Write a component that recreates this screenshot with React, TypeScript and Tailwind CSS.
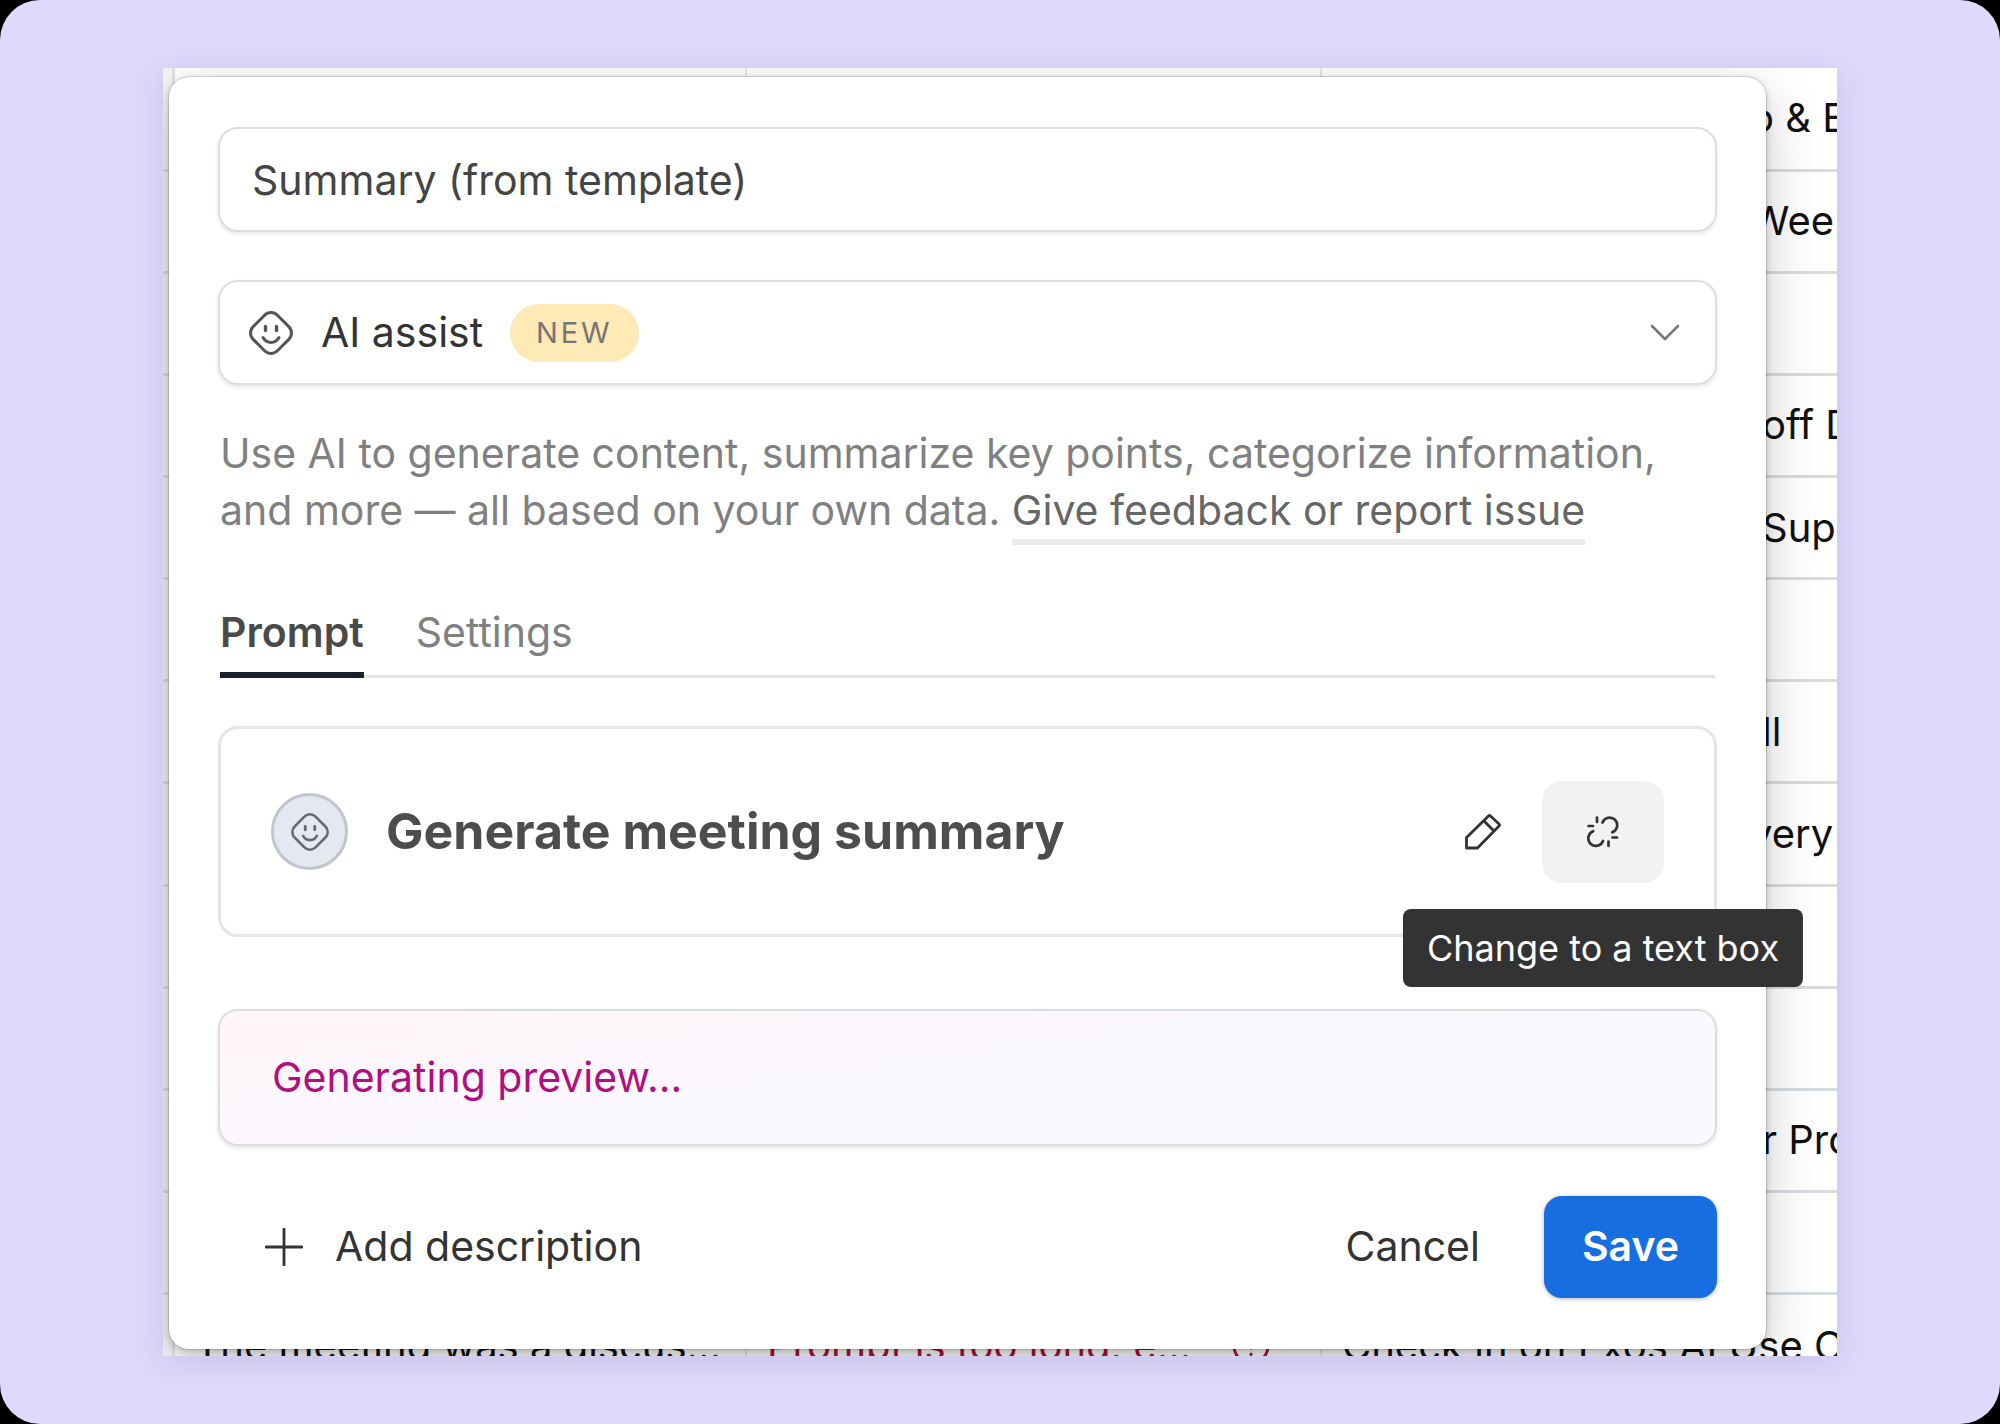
import { useState } from 'react';

const ROWS = [
    { topic: 'o & E', indent: 'pl-[428px]' },
    { topic: 'Wee', indent: 'pl-[428px]' },
    { topic: '', indent: '' },
    { topic: 'off D', indent: 'pl-[440px]' },
    { topic: 'Sup', indent: 'pl-[440px]' },
    { topic: '', indent: '' },
    { topic: 'll', indent: 'pl-[440px]' },
    { topic: 'very', indent: 'pl-[428px]' },
    { topic: '', indent: '' },
    { topic: '', indent: '' },
    { topic: 'r Pro', indent: 'pl-[440px]' },
    { topic: '', indent: '' },
];

function SmileDiamond({ className }: { className?: string }) {
    return (
        <svg viewBox="0 0 44 44" fill="none" stroke="currentColor" strokeWidth="3" strokeLinecap="round" strokeLinejoin="round" className={className}>
            <path d="M15.6 4.2a9 9 0 0 1 12.8 0L39.8 15.6a9 9 0 0 1 0 12.8L28.4 39.8a9 9 0 0 1-12.8 0L4.2 28.4a9 9 0 0 1 0-12.8Z" />
            <path d="M16.5 15.5v4M27.500 15.5v4" strokeWidth="3.4" />
            <path d="M14 26.5c1.8 3.2 4.6 4.9 8 4.9s6.2-1.7 8-4.9" />
        </svg>
    );
}

function PencilIcon() {
    return (
        <svg viewBox="0 0 36 36" fill="none" stroke="currentColor" strokeWidth="2.8" strokeLinejoin="round" className="size-9">
            <path d="M1.5 23.5 23.5 2q1-1 2 0L34 10q1 1 0 2L12.5 34h-11Z" />
            <path d="m19 7 9.5 9.5" />
        </svg>
    );
}

function UnlinkIcon() {
    return (
        <svg viewBox="0 0 32 32" fill="none" stroke="currentColor" strokeWidth="2.7" strokeLinecap="round" className="size-8">
            <path d="M15.5 6.5a7.6 7.6 0 1 1 9.8 9.8" />
            <path d="M16 25a7.6 7.6 0 1 1-9.8-9.8" />
            <path d="M10 1.5V6M1.5 10H6M21.5 25.5V30M25.5 21.5H30" />
        </svg>
    );
}

function DataGrid() {
    return (
        <table className="absolute inset-x-0 top-0 w-full h-[1328px] table-fixed border-collapse text-[40px] leading-none text-[#111] whitespace-nowrap">
            <colgroup>
                <col className="w-[10px]" />
                <col className="w-[573px]" />
                <col className="w-[575px]" />
                <col />
            </colgroup>
            <tbody>
                {ROWS.map((row, i) => (
                    <tr key={i} className="h-[102px] border-b-3 border-[#d9dcdf]">
                        <td className="border-r-3 border-r-[#e4e4e4] bg-[#f5f5f5] p-0" />
                        <td className="border-r-2 border-r-[#e8e8e8] p-0" />
                        <td className="border-r-2 border-r-[#e8e8e8] p-0" />
                        <td className={row.indent}>{row.topic}</td>
                    </tr>
                ))}
                <tr className="h-[102px]">
                    <td className="border-r-3 border-r-[#e4e4e4] bg-[#f5f5f5] p-0" />
                    <td className="border-r-2 border-r-[#e8e8e8] pl-5">The meeting was a discus...</td>
                    <td className="border-r-2 border-r-[#e8e8e8] pl-5 text-[#b0103a]">
                        <span className="flex items-center gap-10">
                            Prompt is too long. e...
                            <svg viewBox="0 0 40 40" fill="none" stroke="currentColor" strokeWidth="3" strokeLinecap="round" className="size-10">
                                <circle cx="20" cy="20" r="17" />
                                <path d="M20 12v10M20 28v.5" />
                            </svg>
                        </span>
                    </td>
                    <td className="pl-5">Check in on Exos AI Use C</td>
                </tr>
            </tbody>
        </table>
    );
}

export default function App() {
    const [name, setName] = useState('Summary (from template)');
    const [tab, setTab] = useState('prompt');

    return (
        <div className="min-h-screen bg-black font-['Inter',sans-serif]">
            <div className="min-h-screen rounded-[40px] bg-[#dfd9fb] px-[163px] py-[68px]">
                <main className="relative overflow-hidden bg-white pt-[9px] pr-[71px] pb-[7px] pl-[6px] shadow-[0_6px_30px_rgba(90,80,140,0.16)]">
                    <DataGrid />

                    <form
                        className="relative rounded-[20px] bg-white px-[49px] pt-[50px] pb-[51px] shadow-[0_0_0_1px_rgba(0,0,0,0.12),0_3px_8px_rgba(0,0,0,0.2),0_16px_56px_rgba(0,0,0,0.2)]"
                        onSubmit={e => e.preventDefault()}
                    >
                        <input
                            aria-label="Field name"
                            value={name}
                            onChange={e => setName(e.target.value)}
                            className="block h-[105px] w-full rounded-[20px] border-2 border-[#dedede] px-8 text-[41px] text-[#444] shadow-[0_2px_4px_rgba(0,0,0,0.1)] outline-none"
                        />

                        <div className="mt-12 flex h-[105px] items-center rounded-[20px] border-2 border-[#dedede] px-[29px] shadow-[0_2px_4px_rgba(0,0,0,0.1)]">
                            <SmileDiamond className="size-11 text-[#555]" />
                            <select aria-label="Field type" className="ml-7 appearance-none bg-transparent text-[41px] text-[#333] outline-none">
                                <option>AI assist</option>
                            </select>
                            <span className="ml-[26px] rounded-full bg-[#ffe9b5] px-[26px] text-[29px] leading-[58px] tracking-widest text-[#757575]">NEW</span>
                            <svg viewBox="0 0 30 18" fill="none" stroke="currentColor" strokeWidth="2.6" strokeLinecap="round" strokeLinejoin="round" className="ml-auto mr-1.5 w-[30px] text-[#777]">
                                <path d="m2 2 13 13L28 2" />
                            </svg>
                        </div>

                        <div className="px-[2px]">
                            <p className="mt-10 text-[41px] leading-[57px] text-[#808080]">
                                Use AI to generate content, summarize key points, categorize information, and more — all based on your own data.{' '}
                                <a href="#feedback" className="border-b-6 border-[#ebebeb] pb-1 text-[#666]">Give feedback or report issue</a>
                            </p>

                            <div role="tablist" className="mt-[63px] flex gap-[52px] border-b-3 border-[#e5e5e5] text-[41px] leading-[60px] text-[#808080]">
                                <button
                                    type="button"
                                    role="tab"
                                    aria-selected={tab === 'prompt'}
                                    onClick={() => setTab('prompt')}
                                    className="-mb-[3px] border-b-6 border-transparent pb-2.5 aria-selected:border-[#191f2b] aria-selected:font-semibold aria-selected:text-[#4a4a4a]"
                                >
                                    Prompt
                                </button>
                                <button
                                    type="button"
                                    role="tab"
                                    aria-selected={tab === 'settings'}
                                    onClick={() => setTab('settings')}
                                    className="-mb-[3px] border-b-6 border-transparent pb-2.5 aria-selected:border-[#191f2b] aria-selected:font-semibold aria-selected:text-[#4a4a4a]"
                                >
                                    Settings
                                </button>
                            </div>
                        </div>

                        <section className="mt-12 flex h-[211px] items-center rounded-[20px] border-3 border-[#e5e5e5] px-[50px]">
                            <span className="flex size-[77px] items-center justify-center rounded-full border-3 border-[#c3c4cc] bg-[#e4e9f1]">
                                <SmileDiamond className="size-[38px] text-[#656b75]" />
                            </span>
                            <h2 className="ml-[38px] text-[50px] font-bold text-[#4d4d4d]">Generate meeting summary</h2>
                            <button type="button" aria-label="Edit prompt" className="ml-auto flex size-[102px] items-center justify-center text-[#333]">
                                <PencilIcon />
                            </button>
                            <div className="relative ml-2">
                                <button type="button" aria-label="Change to a text box" className="flex h-[102px] w-[122px] items-center justify-center rounded-[20px] bg-[#f2f2f2] text-[#333]">
                                    <UnlinkIcon />
                                </button>
                                <div role="tooltip" className="absolute top-full left-1/2 z-10 mt-[26px] -translate-x-1/2 rounded-lg bg-[#333] px-6 text-[36px] leading-[78px] whitespace-nowrap text-white">
                                    Change to a text box
                                </div>
                            </div>
                        </section>

                        <output className="mt-[72px] flex h-[137px] items-center rounded-[20px] border-2 border-[#dcdde0] bg-[linear-gradient(172deg,#fff6fa,#f8f9ff_70%)] px-[52px] text-[41px] text-[#b0107f] shadow-[0_2px_4px_rgba(0,0,0,0.1)]">
                            Generating preview...
                        </output>

                        <footer className="mt-[50px] flex h-[102px] items-center text-[41px] text-[#333]">
                            <button type="button" className="flex items-center gap-8 pl-[47px]">
                                <svg viewBox="0 0 38 38" stroke="currentColor" strokeWidth="2.8" strokeLinecap="round" className="w-[38px]">
                                    <path d="M19 1v36M1 19h36" />
                                </svg>
                                Add description
                            </button>
                            <button type="button" className="ml-auto">Cancel</button>
                            <button type="submit" className="ml-16 h-full rounded-[18px] bg-[#176ee1] px-[38px] font-semibold text-white shadow-[0_1px_4px_rgba(0,0,0,0.3)]">
                                Save
                            </button>
                        </footer>
                    </form>
                </main>
            </div>
        </div>
    );
}
